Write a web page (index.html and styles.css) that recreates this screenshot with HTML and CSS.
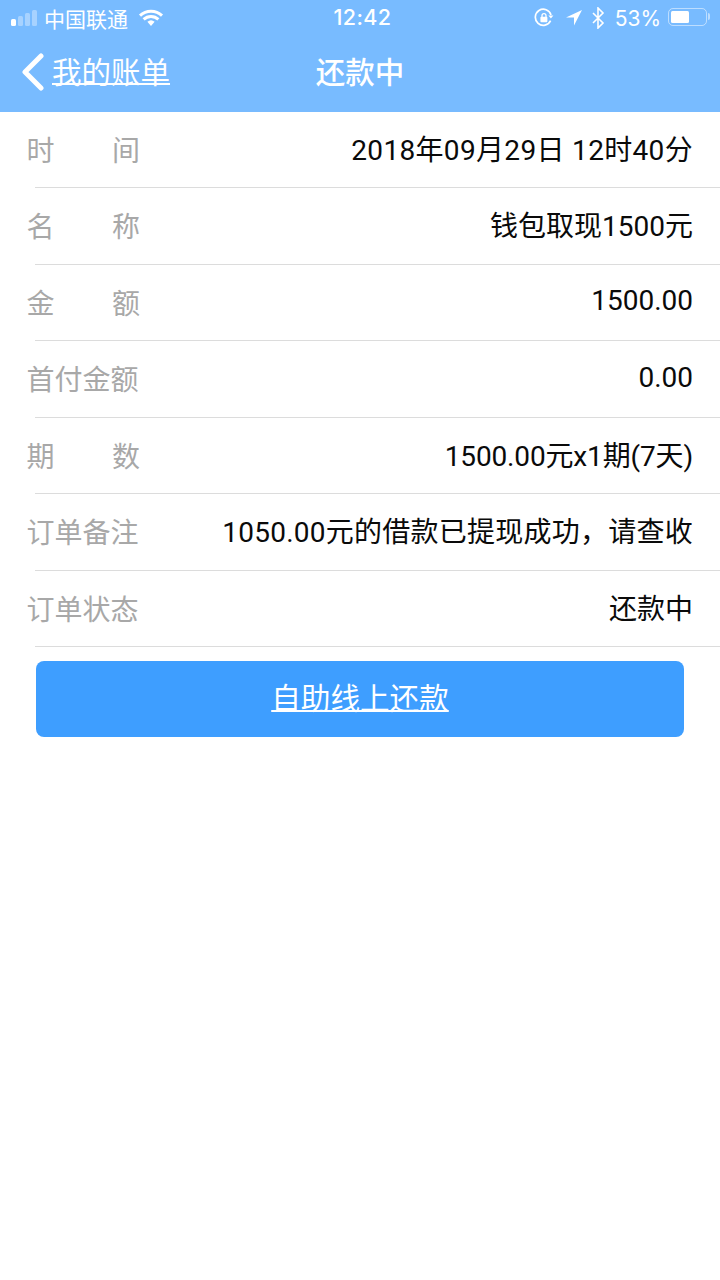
FILE: index.html
```html
<!DOCTYPE html>
<html lang="zh">
<head>
<meta charset="utf-8">
<title>还款中</title>
<link rel="stylesheet" href="styles.css">
</head>
<body>
<header class="top">
  <div class="status">
    <div class="status-left">
      <span class="signal"><i class="on"></i><i></i><i></i><i></i></span>
      <span class="carrier">中国联通</span>
      <svg class="wifi" width="26" height="18" viewBox="0 0 26 18"><path d="M13 17l-3.6-4.2a5.4 5.4 0 0 1 7.2 0z" fill="#fff"/><path d="M2 6.6a16 16 0 0 1 22 0M5.6 10.4a10.8 10.8 0 0 1 14.8 0" fill="none" stroke="#fff" stroke-width="3"/></svg>
    </div>
    <div class="clock">12:42</div>
    <div class="status-right">
      <svg class="lock" width="20" height="20" viewBox="0 0 20 20"><path d="M16.6 12.6A8 8 0 1 1 17 7" fill="none" stroke="#fff" stroke-width="1.7"/><path d="M14.4 7.6h5l-2.5 3z" fill="#fff"/><rect x="6.4" y="8.8" width="7" height="5.4" rx="1" fill="#fff"/><path d="M8 9V7.6a2 2 0 0 1 4 0V9" fill="none" stroke="#fff" stroke-width="1.3"/></svg>
      <svg class="arrow" width="18" height="18" viewBox="0 0 18 18"><path d="M17 1L1 8.6h8V16.6z" fill="#fff"/></svg>
      <svg class="bt" width="14" height="22" viewBox="0 0 14 22"><path d="M2 6l10 10-5 5V1l5 5L2 16" fill="none" stroke="#fff" stroke-width="1.6"/></svg>
      <span class="pct">53%</span>
      <span class="battery"><span class="battery-body"><span class="battery-fill"></span></span><span class="battery-tip"></span></span>
    </div>
  </div>
  <nav class="nav">
    <a class="back">
      <svg width="26" height="38" viewBox="0 0 26 38"><path d="M21 3L5 19l16 16" fill="none" stroke="#fff" stroke-width="5" stroke-linecap="round" stroke-linejoin="round"/></svg>
      <span class="back-text">我的账单</span>
    </a>
    <h1 class="title">还款中</h1>
  </nav>
</header>
<main class="list">
  <div class="row"><span class="label spread"><span>时</span><span>间</span></span><span class="value value-wide">2018年09月29日 12时40分</span></div>
  <div class="row"><span class="label spread"><span>名</span><span>称</span></span><span class="value">钱包取现1500元</span></div>
  <div class="row"><span class="label spread"><span>金</span><span>额</span></span><span class="value">1500.00</span></div>
  <div class="row"><span class="label">首付金额</span><span class="value">0.00</span></div>
  <div class="row"><span class="label spread"><span>期</span><span>数</span></span><span class="value value-tight">1500.00元x1期(7天)</span></div>
  <div class="row"><span class="label">订单备注</span><span class="value value-note">1050.00元的借款已提现成功，请查收</span></div>
  <div class="row"><span class="label">订单状态</span><span class="value">还款中</span></div>
  <div class="action"><a class="pay">自助线上还款</a></div>
</main>
</body>
</html>
```
FILE: styles.css
```css
* { box-sizing: border-box; }
html, body { margin: 0; padding: 0; }
body {
  width: 720px;
  height: 1280px;
  background: #fff;
  overflow: hidden;
  font-family: "Noto Sans CJK SC", "Roboto", "Noto Sans", sans-serif;
}
.top { height: 112px; background: #78bbff; color: #fff; }
.status {
  height: 36px;
  position: relative;
  display: flex;
  justify-content: space-between;
  align-items: center;
  padding: 0 10px 0 11px;
  font-size: 21px;
  line-height: 1;
}
.status-left, .status-right { display: flex; align-items: center; }
.signal { display: flex; align-items: flex-end; gap: 2px; width: 28px; }
.signal i { display: block; width: 5px; background: rgba(255,255,255,.35); border-radius: 1.5px; }
.signal i:nth-child(1) { height: 7px; }
.signal i:nth-child(2) { height: 10px; }
.signal i:nth-child(3) { height: 13px; }
.signal i:nth-child(4) { height: 16px; }
.signal i.on { background: #fff; }
.carrier { margin-left: 5px; font-size: 21px; }
.wifi { margin-left: 10px; }
.clock {
  position: absolute;
  left: 0; right: 0;
  padding-left: 5px;
  text-align: center;
  font-family: "Inter", sans-serif;
  font-size: 21.5px;
  font-weight: 500;
  letter-spacing: .4px;
}
.lock { margin-right: 11px; }
.arrow { margin-right: 8px; }
.bt { margin-right: 10px; }
.pct { font-family: "Inter", sans-serif; font-size: 21px; }
.battery { display: flex; align-items: center; margin-left: 7px; margin-bottom: 3px; }
.battery-body {
  width: 39px; height: 18px;
  border: 1.5px solid rgba(255,255,255,.5);
  border-radius: 5px;
  padding: 2px;
  display: block;
}
.battery-fill { display: block; width: 18px; height: 100%; background: #fff; border-radius: 1.5px; }
.battery-tip { width: 2px; height: 7px; background: rgba(255,255,255,.5); margin-left: 1px; border-radius: 0 2px 2px 0; }
.nav { height: 76px; position: relative; display: flex; align-items: center; padding-left: 20px; padding-bottom: 4px; }
.back { display: flex; align-items: center; position: relative; z-index: 1; }
.back-text { margin-left: 6px; margin-bottom: 4px; font-size: 29.5px; line-height: 34px; text-decoration: underline; text-underline-offset: 0; text-decoration-thickness: 2px; }
.title {
  position: absolute;
  left: 0; right: 0; top: 0;
  height: 68px;
  margin: 0;
  display: flex;
  align-items: center;
  justify-content: center;
  font-size: 29.5px;
  font-weight: 500;
}
.list { margin-top: -0.5px; }
.row {
  height: 76.5px;
  display: flex;
  justify-content: space-between;
  align-items: center;
  padding: 0 27px 4px;
  position: relative;
  font-size: 28px;
}
.row::after {
  content: "";
  position: absolute;
  left: 35px; right: 0; bottom: 0;
  height: 1px;
  background: #dcdcdc;
}
.label { color: #a8a8a8; width: 113.5px; margin-left: -0.5px; padding-top: 2px; white-space: nowrap; font-size: 28px; }
.spread { display: flex; justify-content: space-between; }
.value { color: #0a0a0a; font-family: "Roboto", "Noto Sans CJK SC", sans-serif; font-size: 28px; white-space: nowrap; }
.value-wide { letter-spacing: .33px; }
.value-note { letter-spacing: .25px; }
.value-tight { letter-spacing: -.15px; }
.action { padding: 14px 36px 0; }
.pay {
  display: flex;
  align-items: center;
  justify-content: center;
  height: 76px;
  padding-bottom: 6px;
  background: #3e9eff;
  border-radius: 8px;
  color: #fff;
  font-size: 29.6px;
  text-decoration: underline;
  text-underline-offset: 1px;
  text-decoration-thickness: 2px;
}
```
